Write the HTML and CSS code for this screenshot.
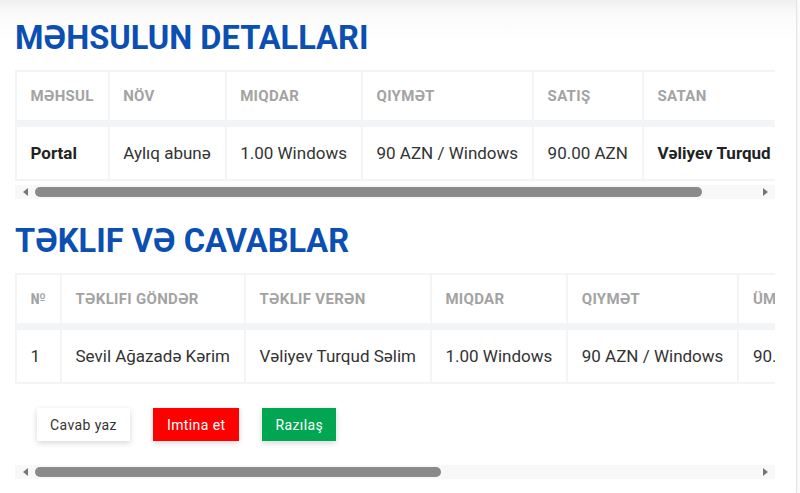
FILE: index.html
```html
<!DOCTYPE html>
<html lang="az">
<head>
<meta charset="utf-8">
<title>Məhsulun detalları</title>
<link rel="stylesheet" href="styles.css">
</head>
<body>
<main class="page">
  <section class="block">
    <h2 class="title">MƏHSULUN DETALLARI</h2>
    <div class="scroller">
      <div class="viewport">
        <table class="grid">
          <thead>
            <tr><th>MƏHSUL</th><th>NÖV</th><th>MIQDAR</th><th>QIYMƏT</th><th>SATIŞ</th><th>SATAN</th></tr>
          </thead>
          <tbody>
            <tr><td class="strong">Portal</td><td>Aylıq abunə</td><td>1.00 Windows</td><td>90 AZN / Windows</td><td>90.00 AZN</td><td class="strong">Vəliyev Turqud Səlim</td></tr>
          </tbody>
        </table>
      </div>
      <div class="sbar">
        <span class="arrow left"></span>
        <div class="track"><div class="thumb thumb-a"></div></div>
        <span class="arrow right"></span>
      </div>
    </div>
  </section>

  <section class="block second">
    <h2 class="title">TƏKLIF VƏ CAVABLAR</h2>
    <div class="scroller">
      <div class="viewport">
        <table class="grid">
          <thead>
            <tr><th>№</th><th>TƏKLIFI GÖNDƏR</th><th>TƏKLIF VERƏN</th><th>MIQDAR</th><th>QIYMƏT</th><th>ÜMUMI MƏBLƏĞ</th><th>TARIX</th></tr>
          </thead>
          <tbody>
            <tr><td>1</td><td>Sevil Ağazadə Kərim</td><td>Vəliyev Turqud Səlim</td><td>1.00 Windows</td><td>90 AZN / Windows</td><td>90.00 AZN</td><td>12.05.2023</td></tr>
          </tbody>
        </table>
        <div class="actions">
          <button class="btn btn-white">Cavab yaz</button>
          <button class="btn btn-red">Imtina et</button>
          <button class="btn btn-green">Razılaş</button>
        </div>
      </div>
      <div class="sbar">
        <span class="arrow left"></span>
        <div class="track"><div class="thumb thumb-b"></div></div>
        <span class="arrow right"></span>
      </div>
    </div>
  </section>
</main>
</body>
</html>
```
FILE: styles.css
```css
* { box-sizing: border-box; }

html, body {
  margin: 0;
  padding: 0;
  height: 100%;
}

body {
  font-family: Roboto, "Noto Sans", "Liberation Sans", sans-serif;
  color: #333;
  background: #fff;
  overflow: hidden;
}

.page {
  width: 797px;
  min-height: 100%;
  padding: 20px 22px 0 15px;
  background: linear-gradient(#f0f0f0 0, #fafafa 14px, #fff 40px);
  border-right: 1px solid #e4e4e4;
  box-shadow: 2px 0 3px rgba(0,0,0,0.04);
}

.title {
  margin: 0 0 14px;
  font-size: 32.6px;
  line-height: 36px;
  font-weight: 700;
  color: #0b4fb3;
}

.second { margin-top: 24px; }

.scroller { width: 760px; }

.viewport {
  overflow: hidden;
  width: 760px;
}

.grid {
  border-collapse: collapse;
  white-space: nowrap;
}

.grid th, .grid td {
  border: 2px solid #f3f4f6;
  padding: 0 14px 0 13.5px;
  text-align: left;
}

.grid th {
  height: 52px;
  font-size: 15px;
  font-weight: 700;
  color: #a3a3a3;
  letter-spacing: 0.3px;
  border-bottom-width: 7px;
}

.grid td {
  height: 57px;
  font-size: 17px;
  letter-spacing: 0;
  color: #333;
}

.grid td.strong { font-weight: 700; color: #222; }

.actions {
  display: flex;
  gap: 23px;
  padding: 24px 0 20px 22px;
}

.btn {
  font-family: inherit;
  font-size: 14px;
  letter-spacing: 0.4px;
  height: 33px;
  padding: 0 13px;
  border: 0;
  border-radius: 0;
  box-shadow: 0 2px 6px rgba(0,0,0,0.16);
}

.btn-white { background: #fff; color: #333; }
.btn-red { background: #ff0000; color: #fff; padding: 0 14px; }
.btn-green { background: #00a651; color: #fff; }

.sbar {
  display: flex;
  align-items: center;
  height: 14px;
  margin-top: 4px;
  background: #f8f8f8;
}

.arrow {
  width: 20px;
  height: 14px;
  display: flex;
  align-items: center;
  justify-content: center;
  flex: none;
}

.arrow::before {
  content: "";
  border-top: 4px solid transparent;
  border-bottom: 4px solid transparent;
}

.arrow.left::before { border-right: 5px solid #777; }
.arrow.right::before { border-left: 5px solid #777; }

.track {
  flex: 1;
  height: 10px;
}

.thumb {
  height: 10px;
  border-radius: 5px;
  background: #8a8a8a;
}

.thumb-a { width: 667px; }
.thumb-b { width: 406px; }
```
